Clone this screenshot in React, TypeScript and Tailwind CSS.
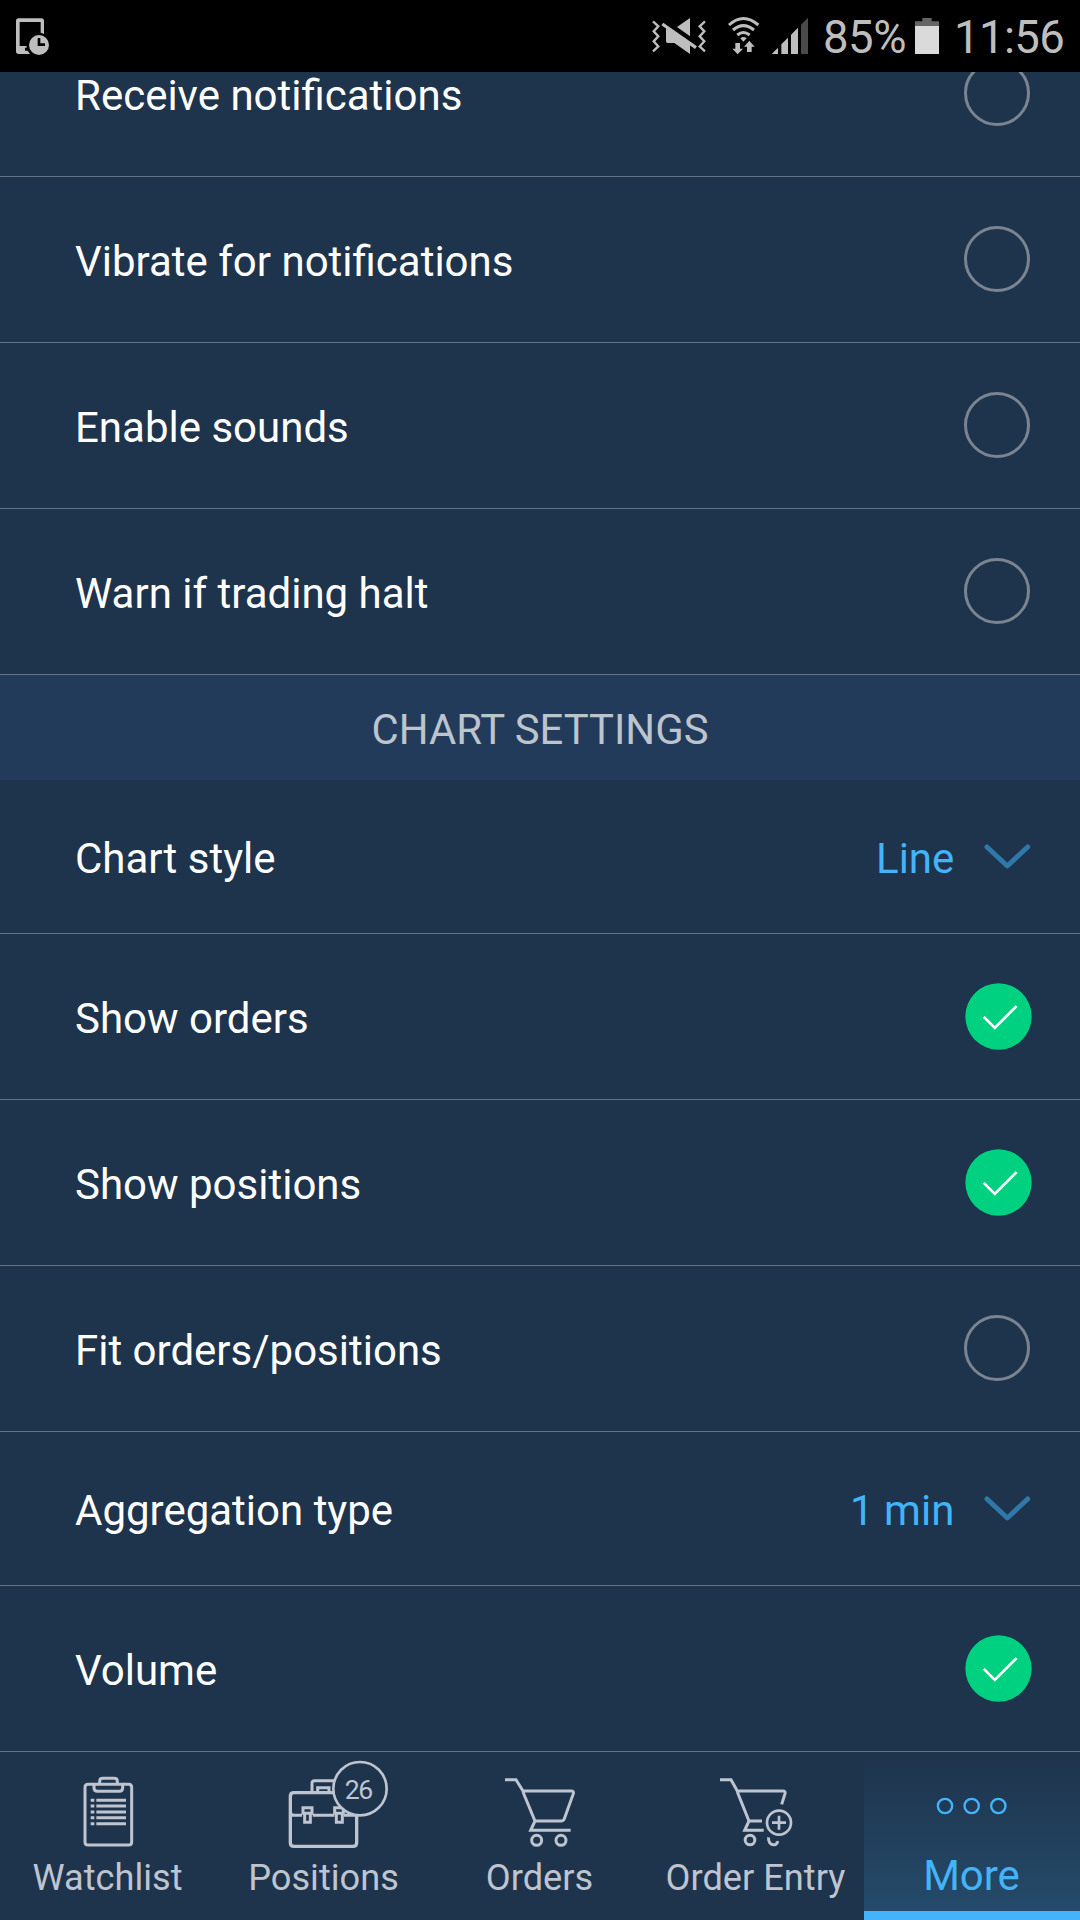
import type { ReactNode } from "react";

function Ring() {
  return <div className="mr-[50px] mb-[1px] size-[66px] shrink-0 rounded-full border-[3px] border-[#7b8491]" />;
}

function Checked() {
  return (
    <svg viewBox="375 608 200 200" className="mr-[48px] mb-[1px] h-[67px] w-[67px] shrink-0">
      <circle cx="475" cy="708" r="99" fill="#00d180" />
      <path d="M431 709 L464 742 L529 677" fill="none" stroke="#fff" strokeWidth="8" />
    </svg>
  );
}

function Dropdown({ value }: { value: string }) {
  return (
    <div className="flex items-center">
      <span className="relative top-[2px] text-[42px] leading-[50px] text-[#43b4f9]">{value}</span>
      <svg viewBox="431 190 140 76" className="mr-[49px] ml-[30px] h-[25.33px] w-[46.67px]">
        <path
          d="M440 199 L501 256 L562 199"
          fill="none"
          stroke="#2f78a9"
          strokeWidth="15"
          strokeLinecap="round"
          strokeLinejoin="round"
        />
      </svg>
    </div>
  );
}

function Row({ label, height, children }: { label: string; height: string; children: ReactNode }) {
  return (
    <div
      className={`flex shrink-0 items-center justify-between border-b border-[#667386] pl-[75px] ${height}`}
    >
      <span className="relative top-[2px] text-[42px] leading-[50px] whitespace-nowrap text-white">{label}</span>
      {children}
    </div>
  );
}

function Tab({ label, viewBox, children }: { label: string; viewBox: string; children: ReactNode }) {
  return (
    <div className="flex h-full w-[216px] flex-col items-center text-[#bec5d0]">
      <svg viewBox={viewBox} className="h-[108px] w-[216px]" fill="none" stroke="currentColor" strokeWidth="9">
        {children}
      </svg>
      <span className="-mt-[3px] mr-[1px] text-[36.2px] leading-[42px] whitespace-nowrap">{label}</span>
    </div>
  );
}

function StatusBar() {
  return (
    <div className="z-10 flex h-[72px] shrink-0 items-center bg-black text-[45.5px] leading-[72px] text-[#bebebe]">
      <svg viewBox="0 0 150 216" className="h-[72px] w-[50px]">
        <path
          fillRule="evenodd"
          fill="#bebebe"
          d="M56 55 H124 Q132 55 132 63 V102 L122 98 V66 H59 V138 H80 V143 H75 V152 H83 L90 162 H56 Q48 162 48 154 V63 Q48 55 56 55 Z"
        />
        <circle cx="117" cy="135" r="30" fill="#bebebe" />
        <path d="M117 114 V134 H135" fill="none" stroke="#000" strokeWidth="8" />
      </svg>
      <svg viewBox="90 0 480 216" className="ml-[600px] h-[72px] w-[160px]" fill="#bebebe">
        <g fill="none" stroke="#bebebe" strokeWidth="7">
          <path d="M99 64 L115 79 L101 94 L115 109 L101 124 L115 139 L99 154" />
          <path d="M255 64 L239 79 L253 94 L239 109 L253 124 L239 139 L255 154" />
        </g>
        <path d="M210 54 V109 L171 81 Z" />
        <path d="M138 84 L210 132 V162 L163 129 H143 Q138 129 138 124 Z" />
        <path d="M127 72 L228 143" stroke="#bebebe" strokeWidth="10" />
        <g fill="none" stroke="#bebebe" strokeWidth="9">
          <path d="M327 75 Q370 36 415 75" />
          <path d="M339 90 Q370 64 402 90" />
          <path d="M352 105 Q370 90 389 105" />
        </g>
        <path d="M361 115 Q370 107 380 115 L370 125 Z" />
        <path d="M346 129 H360 V146 H369 L353 163 L337 146 H346 Z" />
        <path d="M381 156 H395 V140 H404 L388 122 L372 140 H381 Z" />
        <path d="M455 162 L474 143 V162 Z" />
        <path d="M484 162 V133 L504 113 V162 Z" />
        <path d="M513 162 V104 L534 83 V162 Z" />
        <path d="M543 162 V74 L564 53 V162 Z" fill="#4a4a4a" />
      </svg>
      <span className="relative top-[2px] ml-[13px] w-[83px] tracking-[-0.5px] whitespace-nowrap">85%</span>
      <svg viewBox="195 0 72 216" className="ml-[9px] h-[72px] w-[24px]">
        <path d="M195 64 H217 V54 H245 V64 H267 V78 H195 Z" fill="#656565" />
        <path d="M195 78 H267 V162 H195 Z" fill="#dadada" />
      </svg>
      <span className="relative top-[2px] ml-[15px] tracking-[-0.6px] whitespace-nowrap">11:56</span>
    </div>
  );
}

const TOGGLE = "h-[166px]";
const SELECT = "h-[154px]";

export default function App() {
  return (
    <div className="flex h-[1920px] w-[1080px] flex-col overflow-hidden bg-[#1e334c] font-[Roboto,sans-serif]">
      <StatusBar />
      <div className="flex h-[1680px] shrink-0 flex-col justify-end overflow-hidden">
        <Row label="Receive notifications" height={TOGGLE}><Ring /></Row>
        <Row label="Vibrate for notifications" height={TOGGLE}><Ring /></Row>
        <Row label="Enable sounds" height={TOGGLE}><Ring /></Row>
        <Row label="Warn if trading halt" height={TOGGLE}><Ring /></Row>
        <div className="flex h-[105px] shrink-0 items-center justify-center bg-[#233b5a] text-[41.8px] text-[#bcc5cd]">
          <span className="relative top-[3px]">CHART SETTINGS</span>
        </div>
        <Row label="Chart style" height={SELECT}><Dropdown value="Line" /></Row>
        <Row label="Show orders" height={TOGGLE}><Checked /></Row>
        <Row label="Show positions" height={TOGGLE}><Checked /></Row>
        <Row label="Fit orders/positions" height={TOGGLE}><Ring /></Row>
        <Row label="Aggregation type" height={SELECT}><Dropdown value="1 min" /></Row>
        <Row label="Volume" height={TOGGLE}><Checked /></Row>
      </div>
      <div className="flex h-[168px] shrink-0">
        <Tab label="Watchlist" viewBox="0 36 648 324">
          <path d="M280 133 H264 Q255 133 255 142 V306 Q255 315 264 315 H386 Q395 315 395 306 V142 Q395 133 386 133 H370" />
          <path d="M299 131 V124 Q299 115 308 115 H343 Q352 115 352 124 V131" />
          <path d="M282 133 V144 Q282 154 292 154 H358 Q368 154 368 144 V133 Z" />
          <path d="M272 181 H283 M272 198 H283 M272 216 H283 M272 233 H283 M272 251 H283 M289 181 H378 M289 198 H378 M289 216 H378 M289 233 H378 M289 251 H378" />
        </Tab>
        <Tab label="Positions" viewBox="648 36 648 324">
          <path d="M1004 158 H882 Q871 158 871 169 V308 Q871 319 882 319 H1059 Q1070 319 1070 308 V222" strokeWidth="10" />
          <path d="M871 216 Q872 226 882 226 H906 M938 226 H1003 M1032 226 H1068" />
          <path d="M936 155 V130 Q936 122 944 122 H1004 M953 155 V143 H987 V155" />
          <path d="M909 203 H936 V220 H909 Z M914 224 V247 H931 V224" />
          <path d="M1004 203 H1030 V220 H1004 Z M1009 224 V247 H1027 V224" />
          <circle cx="1080" cy="146" r="80" fill="#1e334c" strokeWidth="8" />
          <text
            x="1077"
            y="177"
            fontSize="80"
            textAnchor="middle"
            fill="currentColor"
            stroke="none"
            fontFamily="Roboto"
            fontWeight="400"
            textLength="86"
          >
            26
          </text>
        </Tab>
        <Tab label="Orders" viewBox="96 36 648 324">
          <path d="M315 119 H348 L369 153 H514 Q522 153 520 161 L493 236 Q491 243 484 243 H405 L369 156 M405 243 L392 271 H512" />
          <circle cx="410" cy="301" r="15" />
          <circle cx="483" cy="301" r="15" />
        </Tab>
        <Tab label="Order Entry" viewBox="744 36 648 324">
          <path d="M960 119 H993 L1012 153 H1149 Q1157 153 1155 161 L1145 193 M1012 156 L1047 243 H1086 M1047 243 L1034 271 H1091" />
          <circle cx="1050" cy="300" r="14.5" />
          <path d="M1106 292 Q1104 301 1109 308 Q1117 317 1127 313 Q1133 310 1132 303" />
          <circle cx="1137" cy="248" r="36" strokeWidth="8" />
          <path d="M1137 227 V269 M1116 248 H1158" strokeWidth="8" />
        </Tab>
        <div className="flex h-full w-[216px] flex-col items-center border-b-[9px] border-[#43b4f9] bg-linear-to-b from-[#1e334c] to-[#244b6a] text-[#43b4f9]">
          <svg viewBox="132 36 648 300" className="h-[100px] w-[216px] shrink-0" fill="none" stroke="currentColor" strokeWidth="7">
            <circle cx="375" cy="198" r="21.5" />
            <circle cx="455" cy="198" r="21.5" />
            <circle cx="535" cy="198" r="21.5" />
          </svg>
          <span className="mr-[1px] text-[42px] leading-[48px]">More</span>
        </div>
      </div>
    </div>
  );
}
